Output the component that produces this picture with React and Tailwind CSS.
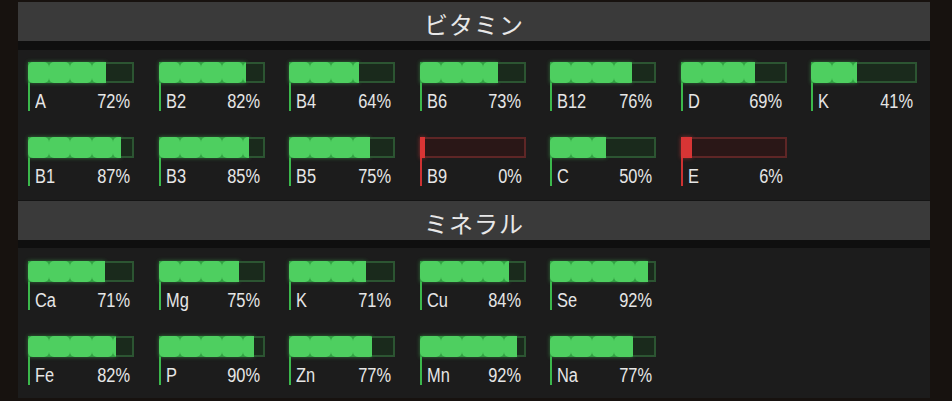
const vitamins = [
  ['A', 72], ['B2', 82], ['B4', 64], ['B6', 73], ['B12', 76], ['D', 69], ['K', 41],
  ['B1', 87], ['B3', 85], ['B5', 75], ['B9', 0], ['C', 50], ['E', 6],
];

const minerals = [
  ['Ca', 71], ['Mg', 75], ['K', 71], ['Cu', 84], ['Se', 92],
  ['Fe', 82], ['P', 90], ['Zn', 77], ['Mn', 92], ['Na', 77],
];

const numFont = { fontFamily: '"Liberation Sans", Arial, sans-serif' };

function Meter({ name, value }) {
  const low = value < 20;
  const fill = 5 + value * 1.01;

  return (
    <div className="flex w-[106px] flex-col">
      <div className="flex h-[21px]">
        <div
          className={`flex shrink-0 overflow-hidden ${low ? 'bg-[#d83535] shadow-[0_0_4px_rgba(230,60,60,0.6)]' : 'bg-[#32a043] shadow-[0_0_4px_rgba(80,220,100,0.45)]'}`}
          style={{ width: fill }}
        >
          {!low &&
            [0, 1, 2, 3, 4].map((i) => (
              <div key={i} className="h-full w-[21.2px] shrink-0 rounded-[5px] bg-[#4ecf60]" />
            ))}
        </div>
        <div
          className={`flex-1 border-2 border-l-0 ${low ? 'border-[#5e2626] bg-[#2a1717]' : 'border-[#2c5532] bg-[#1a2a1c]'}`}
        />
      </div>
      <div
        className={`flex h-[28px] items-end justify-between border-l-2 pl-[5px] pr-[4px] leading-[20px] text-[20px] text-[#e6e6e6] ${low ? 'border-[#cc3232]' : 'border-[#3bb84c]'}`}
        style={numFont}
      >
        <span className="inline-block origin-left scale-x-[0.82]">{name}</span>
        <span className="inline-block origin-right scale-x-[0.82]">{value}%</span>
      </div>
    </div>
  );
}

function Section({ title, items, cols, top, bottom }) {
  return (
    <div>
      <div
        className="flex h-[39px] items-center justify-center bg-[#3a3a3a] pt-[4px] text-[24px] tracking-[1px] text-[#e8e8e8]"
        style={{ fontFamily: '"Noto Sans CJK JP", sans-serif' }}
      >
        {title}
      </div>
      <div className={`bg-[#1c1c1c] pl-[10px] ${top} ${bottom}`}>
        <div className={`grid ${cols} gap-x-[24.5px] gap-y-[26px]`}>
          {items.map(([name, value]) => (
            <Meter key={name} name={name} value={value} />
          ))}
        </div>
      </div>
    </div>
  );
}

export default function App() {
  return (
    <div className="h-[401px] w-[952px] overflow-hidden bg-[#17120f] pt-[2px]">
      <div className="ml-[18px] w-[912px]">
        <Section
          title="ビタミン"
          items={vitamins}
          cols="grid-cols-[repeat(7,106px)]"
          top="border-t-[9px] border-[#0f0f0f] pt-[12px]"
          bottom="pb-[14px]"
        />
        <div className="h-px bg-[#141414]" />
        <Section
          title="ミネラル"
          items={minerals}
          cols="grid-cols-[repeat(5,106px)]"
          top="border-t-[8px] border-[#0f0f0f] pt-[13px]"
          bottom="pb-[13px]"
        />
      </div>
    </div>
  );
}
